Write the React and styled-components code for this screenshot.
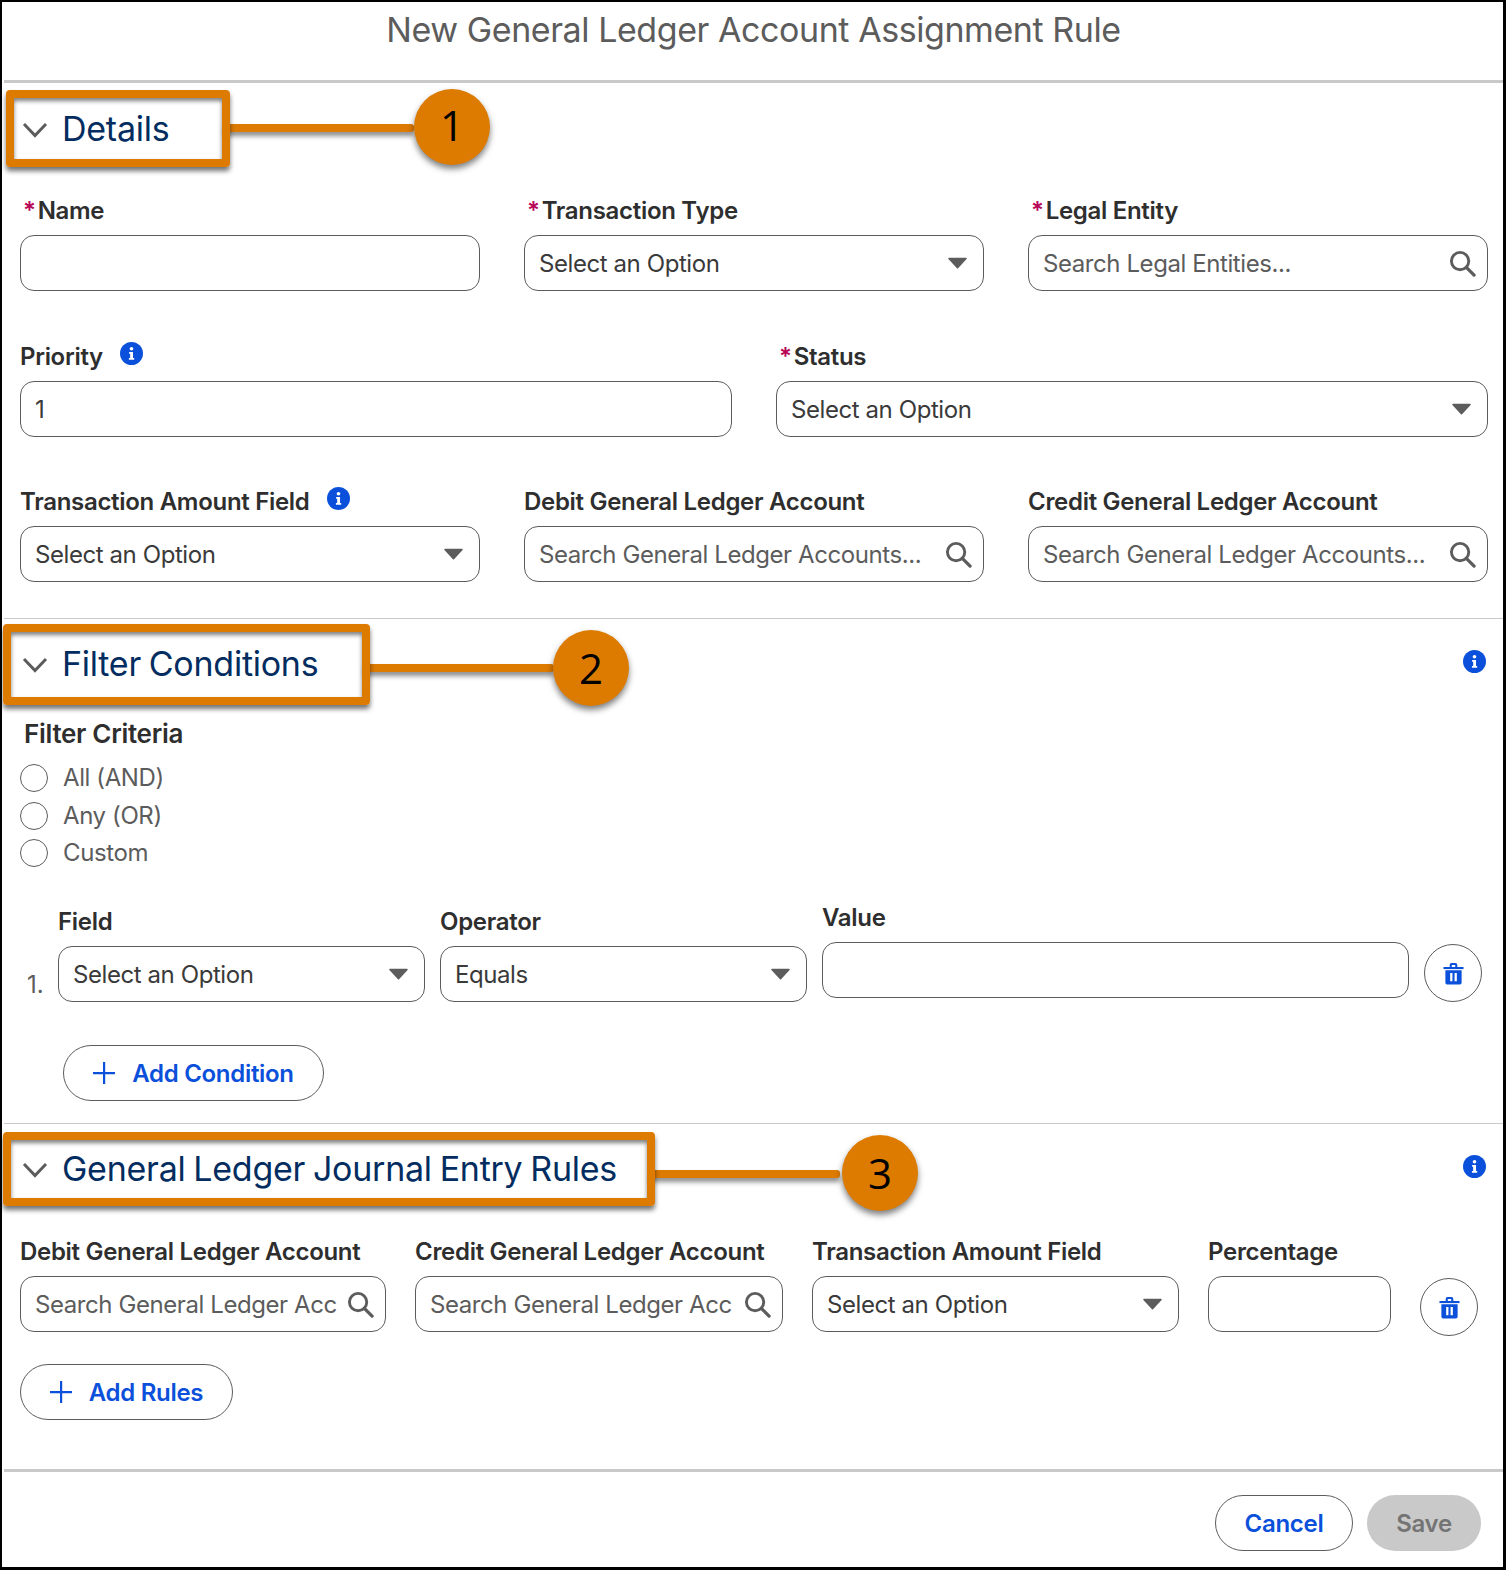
import React from 'react';
import styled, { createGlobalStyle } from 'styled-components';

const GlobalStyle = createGlobalStyle`
  html, body {
    margin: 0;
    padding: 0;
    background: #fff;
  }
  * {
    box-sizing: border-box;
  }
`;

const Frame = styled.div`
  position: relative;
  width: 1506px;
  height: 1570px;
  background: #fff;
  border-style: solid;
  border-color: #000;
  border-width: 2px 3px 3px 2px;
  font-family: Inter, "Liberation Sans", sans-serif;
  overflow: hidden;
`;

const Header = styled.header`
  height: 81px;
  padding-top: 7px;
  border-bottom: 3px solid #c9c9c9;
  margin-left: 2px;
  text-align: center;
`;

const Title = styled.h1`
  margin: 0;
  font-size: 34px;
  line-height: 42px;
  font-weight: 400;
  letter-spacing: -0.43px;
  color: #5c5c5c;
`;

const Section = styled.section`
  height: ${(p) => p.$height}px;
  padding: 0 15px 0 16px;
  border-bottom: ${(p) => (p.$last ? '3px solid #c9c9c9' : '1px solid #c9c9c9')};
  margin-left: 2px;
`;

const SectionHead = styled.div`
  display: flex;
  align-items: center;
  justify-content: space-between;
  height: ${(p) => p.$height || 88}px;
  margin: 0 -15px 0 -16px;
  padding: 0 17px 0 18px;
`;

const SectionTitle = styled.h2`
  display: flex;
  align-items: center;
  gap: 14px;
  margin: 0;
  font-size: 34px;
  font-weight: 400;
  letter-spacing: -0.25px;
  word-spacing: -1.5px;
  color: #032d60;

  svg {
    margin-top: 6px;
  }
`;

const SectionInfo = styled.span`
  display: inline-flex;
  margin-top: -3px;
`;

const Row = styled.div`
  display: grid;
  grid-template-columns: ${(p) => p.$cols};
  column-gap: ${(p) => p.$gap || 44}px;
  margin-top: ${(p) => p.$top || 0}px;
`;

const Field = styled.div`
  display: flex;
  flex-direction: column;
  margin-top: ${(p) => p.$top || 0}px;
`;

const Label = styled.label`
  display: flex;
  align-items: center;
  height: 32px;
  margin-bottom: 9px;
  font-size: 24px;
  font-weight: 600;
  letter-spacing: -0.3px;
  color: #2e2e2e;
`;

const Required = styled.span`
  color: #b8065a;
  margin: 0 2px 0 3px;
`;

const InfoWrap = styled.span`
  display: inline-flex;
  margin: -6px 0 0 17px;
`;

const Box = styled.div`
  display: flex;
  align-items: center;
  justify-content: space-between;
  height: 56px;
  padding: 0 11px 0 14px;
  background: #fff;
  border: 1.3px solid #5c5c5c;
  border-radius: 14px;
  font-size: 24px;
  letter-spacing: -0.42px;
  color: ${(p) => (p.$value ? '#3a3a3a' : '#5c5c5c')};
  white-space: nowrap;
`;

const BoxText = styled.span`
  overflow: hidden;
  min-width: 0;
  flex: 1;
  margin-right: 9px;
`;

const CaretWrap = styled.span`
  display: inline-flex;
  margin-right: 5px;
`;

const Radios = styled.div`
  display: flex;
  flex-direction: column;
  gap: 9.5px;
`;

const RadioRow = styled.div`
  display: flex;
  align-items: center;
  gap: 15px;
  font-size: 24px;
  line-height: 28px;
  letter-spacing: -0.4px;
  color: #5c5c5c;
`;

const RadioDot = styled.span`
  width: 28px;
  height: 28px;
  border: 1.3px solid #5c5c5c;
  border-radius: 50%;
`;

const CriteriaLabel = styled(Label)`
  margin: 10px 0 15px 4px;
  font-size: 26px;
`;

const ConditionRow = styled.div`
  display: grid;
  grid-template-columns: 23px 367px 367px 587px 58px;
  column-gap: 15px;
  align-items: start;
  margin-top: 34px;
`;

const RowNumber = styled.span`
  align-self: end;
  padding: 0 0 1px 7px;
  font-size: 24px;
  color: #5c5c5c;
  line-height: 32px;
`;

const RoundIcon = styled.button`
  display: flex;
  align-items: center;
  justify-content: center;
  width: 58px;
  height: 58px;
  margin-top: ${(p) => p.$top}px;
  padding: 0;
  background: #fff;
  border: 1.3px solid #5c5c5c;
  border-radius: 50%;
`;

const PillButton = styled.button`
  display: flex;
  align-items: center;
  justify-content: center;
  gap: 17px;
  width: ${(p) => p.$width}px;
  height: 56px;
  margin: ${(p) => p.$margin || 0};
  padding: 0;
  background: #fff;
  border: 1.3px solid #5c5c5c;
  border-radius: 28px;
  font-family: inherit;
  font-size: 24px;
  font-weight: 600;
  letter-spacing: -0.3px;
  color: #0b50da;
`;

const SaveButton = styled(PillButton)`
  background: #c9c9c9;
  border: none;
  color: #747474;
`;

const Footer = styled.footer`
  display: flex;
  justify-content: flex-end;
  gap: 14px;
  padding: 23px 22px 0 0;
`;

/* numbered annotations drawn on top of the form */
const CalloutBox = styled.div`
  position: absolute;
  left: ${(p) => p.$x}px;
  top: ${(p) => p.$y}px;
  width: ${(p) => p.$w}px;
  height: ${(p) => p.$h}px;
  border: 8px solid #dd7a00;
  border-radius: 4px;
  box-shadow: 0 4px 5px rgba(0, 0, 0, 0.55), inset 0 3px 4px rgba(0, 0, 0, 0.5);
  pointer-events: none;
`;

const CalloutLine = styled.div`
  position: absolute;
  left: ${(p) => p.$x}px;
  top: ${(p) => p.$y}px;
  width: ${(p) => p.$w}px;
  height: 8px;
  background: #dd7a00;
  border-radius: 3px;
  box-shadow: 0 4px 5px rgba(0, 0, 0, 0.45);
`;

const CalloutBadge = styled.div`
  position: absolute;
  left: ${(p) => p.$x}px;
  top: ${(p) => p.$y}px;
  display: flex;
  align-items: center;
  justify-content: center;
  width: 76px;
  height: 76px;
  padding-bottom: ${(p) => p.$lift}px;
  background: #dd7a00;
  border-radius: 50%;
  box-shadow: 0 4px 6px rgba(0, 0, 0, 0.5);
  font-family: "Open Sans", sans-serif;
  font-size: 42px;
  color: #000;
`;

const Chevron = () => (
  <svg width="26" height="26" viewBox="0 0 26 26" fill="none">
    <path d="M2 6l11 11.5L24 6" stroke="#5c5c5c" strokeWidth="3" />
  </svg>
);

const Caret = () => (
  <CaretWrap>
    <svg width="19" height="12" viewBox="0 0 20 12">
      <path d="M1 0.5h18a0.8 0.8 0 0 1 0.6 1.3L10.6 11.5a0.8 0.8 0 0 1-1.2 0L0.4 1.8A0.8 0.8 0 0 1 1 0.5z" fill="#5c5c5c" />
    </svg>
  </CaretWrap>
);

const Search = () => (
  <svg width="27" height="27" viewBox="0 0 28 28" fill="none">
    <circle cx="11.5" cy="11.5" r="9" stroke="#5c5c5c" strokeWidth="3" />
    <path d="M18 18l8 8" stroke="#5c5c5c" strokeWidth="3.4" strokeLinecap="round" />
  </svg>
);

const Info = () => (
  <svg width="23" height="23" viewBox="0 0 24 24">
    <circle cx="12" cy="12" r="12" fill="#0b50da" />
    <circle cx="12" cy="7" r="1.9" fill="#fff" />
    <path d="M9.5 10.4h4.1v6.2h1.2v1.9H9.3v-1.9h1.3v-4.3H9.5z" fill="#fff" />
  </svg>
);

const Trash = () => (
  <svg width="21" height="23" viewBox="0 0 22 24" fill="#0b50da">
    <path d="M0.5 5.2h21v2.2h-21z" />
    <path d="M7 5.2V3a2 2 0 0 1 2-2h4a2 2 0 0 1 2 2v2.2h-2.2V3.2H9.2v2z" />
    <path fillRule="evenodd" d="M2.5 8.6h17v13a1.8 1.8 0 0 1-1.8 1.8H4.3a1.8 1.8 0 0 1-1.8-1.8zM7.5 11.5v8.5h2.4v-8.5zM12.1 11.5v8.5h2.4v-8.5z" />
  </svg>
);

const Plus = () => (
  <svg width="22" height="22" viewBox="0 0 22 22">
    <path d="M10 0h2.2v10H22v2.2H12.2V22H10V12.2H0V10h10z" fill="#0b50da" />
  </svg>
);

const FormField = ({ label, required, info, top, children }) => (
  <Field $top={top}>
    <Label>
      {required && <Required>*</Required>}
      {label}
      {info && (
        <InfoWrap>
          <Info />
        </InfoWrap>
      )}
    </Label>
    {children}
  </Field>
);

const SelectBox = ({ text = 'Select an Option' }) => (
  <Box $value>
    <BoxText>{text}</BoxText>
    <Caret />
  </Box>
);

const SearchBox = ({ text }) => (
  <Box>
    <BoxText>{text}</BoxText>
    <Search />
  </Box>
);

function App() {
  return (
    <Frame>
      <GlobalStyle />
      <Header>
        <Title>New General Ledger Account Assignment Rule</Title>
      </Header>

      <Section $height={536}>
        <SectionHead $height={90}>
          <SectionTitle>
            <Chevron />
            Details
          </SectionTitle>
        </SectionHead>
        <Row $cols="1fr 1fr 1fr" $top={21}>
          <FormField label="Name" required>
            <Box />
          </FormField>
          <FormField label="Transaction Type" required>
            <SelectBox />
          </FormField>
          <FormField label="Legal Entity" required>
            <SearchBox text="Search Legal Entities..." />
          </FormField>
        </Row>
        <Row $cols="1fr 1fr" $top={49}>
          <FormField label="Priority" info>
            <Box $value>1</Box>
          </FormField>
          <FormField label="Status" required>
            <SelectBox />
          </FormField>
        </Row>
        <Row $cols="1fr 1fr 1fr" $top={48}>
          <FormField label="Transaction Amount Field" info>
            <SelectBox />
          </FormField>
          <FormField label="Debit General Ledger Account">
            <SearchBox text="Search General Ledger Accounts..." />
          </FormField>
          <FormField label="Credit General Ledger Account">
            <SearchBox text="Search General Ledger Accounts..." />
          </FormField>
        </Row>
      </Section>

      <Section $height={505}>
        <SectionHead>
          <SectionTitle>
            <Chevron />
            Filter Conditions
          </SectionTitle>
          <SectionInfo>
            <Info />
          </SectionInfo>
        </SectionHead>
        <CriteriaLabel>Filter Criteria</CriteriaLabel>
        <Radios>
          <RadioRow>
            <RadioDot />
            All (AND)
          </RadioRow>
          <RadioRow>
            <RadioDot />
            Any (OR)
          </RadioRow>
          <RadioRow>
            <RadioDot />
            Custom
          </RadioRow>
        </Radios>
        <ConditionRow>
          <RowNumber>1.</RowNumber>
          <FormField label="Field" top={4}>
            <SelectBox />
          </FormField>
          <FormField label="Operator" top={4}>
            <SelectBox text="Equals" />
          </FormField>
          <FormField label="Value">
            <Box />
          </FormField>
          <RoundIcon $top={43}>
            <Trash />
          </RoundIcon>
        </ConditionRow>
        <PillButton $width={261} $margin="43px 0 0 43px">
          <Plus />
          Add Condition
        </PillButton>
      </Section>

      <Section $height={348} $last>
        <SectionHead>
          <SectionTitle>
            <Chevron />
            General Ledger Journal Entry Rules
          </SectionTitle>
          <SectionInfo>
            <Info />
          </SectionInfo>
        </SectionHead>
        <Row $cols="366px 368px 367px 183px 58px" $gap={29} $top={23}>
          <FormField label="Debit General Ledger Account">
            <SearchBox text="Search General Ledger Acc" />
          </FormField>
          <FormField label="Credit General Ledger Account">
            <SearchBox text="Search General Ledger Acc" />
          </FormField>
          <FormField label="Transaction Amount Field">
            <SelectBox />
          </FormField>
          <FormField label="Percentage">
            <Box />
          </FormField>
          <RoundIcon $top={43}>
            <Trash />
          </RoundIcon>
        </Row>
        <PillButton $width={213} $margin="28px 0 0 0">
          <Plus />
          Add Rules
        </PillButton>
      </Section>

      <Footer>
        <PillButton $width={138}>Cancel</PillButton>
        <SaveButton $width={114}>Save</SaveButton>
      </Footer>

      <CalloutLine $x={222} $y={122} $w={190} />
      <CalloutBox $x={4} $y={88} $w={224} $h={77} />
      <CalloutBadge $x={412} $y={87} $lift={5}>1</CalloutBadge>

      <CalloutLine $x={362} $y={662} $w={190} />
      <CalloutBox $x={1} $y={622} $w={367} $h={81} />
      <CalloutBadge $x={551} $y={628} $lift={2}>2</CalloutBadge>

      <CalloutLine $x={648} $y={1168} $w={190} />
      <CalloutBox $x={1} $y={1130} $w={652} $h={74} />
      <CalloutBadge $x={840} $y={1133} $lift={1}>3</CalloutBadge>
    </Frame>
  );
}

export default App;
